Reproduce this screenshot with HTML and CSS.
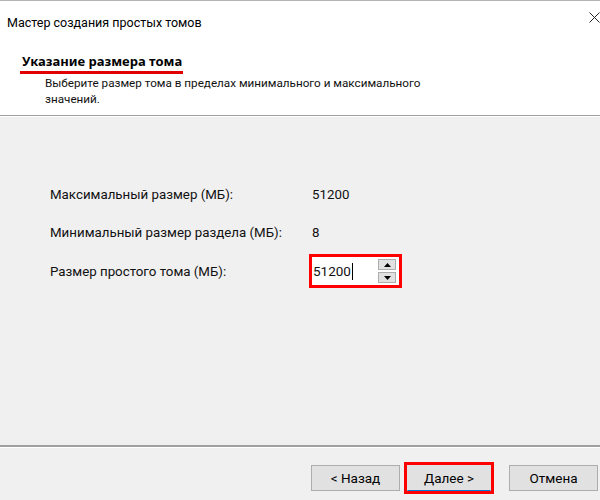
FILE: index.html
```html
<!DOCTYPE html>
<html lang="ru">
<head>
<meta charset="utf-8">
<link rel="stylesheet" href="styles.css">
</head>
<body>
<div class="window">
  <div class="top">
    <div class="titlebar">
      <span class="title">Мастер создания простых томов</span>
      <svg class="close" width="11" height="11" viewBox="0 0 11 11"><path d="M0.5 0.5 L10.5 10.5 M10.5 0.5 L0.5 10.5" stroke="#222" stroke-width="1" fill="none"/></svg>
    </div>
    <div class="header">
      <div class="heading"><span class="mark">Указание размера тома</span></div>
      <div class="subtitle">Выберите размер тома в пределах минимального и максимального<br>значений.</div>
    </div>
  </div>
  <div class="content">
    <div class="row"><span class="label">Максимальный размер (МБ):</span><span class="value">51200</span></div>
    <div class="row"><span class="label">Минимальный размер раздела (МБ):</span><span class="value">8</span></div>
    <div class="row"><span class="label">Размер простого тома (МБ):</span>
      <div class="spin-wrap">
        <div class="spin">
          <span class="spin-text">51200<span class="caret"></span></span>
          <div class="spin-btns">
            <div class="sbtn"><svg width="7" height="4" viewBox="0 0 7 4"><path d="M3.5 0 L7 4 L0 4 Z" fill="#000"/></svg></div>
            <div class="sbtn"><svg width="7" height="4" viewBox="0 0 7 4"><path d="M0 0 L7 0 L3.5 4 Z" fill="#000"/></svg></div>
          </div>
        </div>
      </div>
    </div>
  </div>
  <div class="footer">
    <button class="btn">&lt; Назад</button>
    <div class="hl"><button class="btn default">Далее &gt;</button></div>
    <button class="btn cancel">Отмена</button>
  </div>
</div>
</body>
</html>
```
FILE: styles.css
```css
* { box-sizing: border-box; }
html, body { margin: 0; padding: 0; }
body {
  width: 600px;
  height: 500px;
  overflow: hidden;
  font-family: Roboto, "Noto Sans", sans-serif;
  font-size: 12px;
  color: #000;
  background: #f0f0f0;
}
.window {
  height: 500px;
  display: flex;
  flex-direction: column;
}
.top {
  background: #fff;
  border-top: 1px solid #b4b4b4;
  height: 116px;
  border-bottom: 1px solid #a0a0a0;
  box-shadow: 0 1px 0 #fff;
  flex: none;
}
.titlebar {
  height: 43px;
  display: flex;
  align-items: center;
  justify-content: space-between;
  padding: 0 0 0 7px;
}
.title { font-size: 12.5px; color: #000; }
.close { align-self: flex-start; margin-top: 11px; margin-right: 0; }
.header { padding-left: 20px; }
.heading { height: 30px; display: flex; align-items: flex-end; }
.mark {
  font-family: "Noto Sans", sans-serif;
  font-weight: bold;
  font-size: 13px;
  padding: 0 1px 1px 2px;
  border-bottom: 3px solid #e00000;
  line-height: 17px;
}
.subtitle {
  padding-left: 25px;
  margin-top: 1px;
  line-height: 16px;
  font-size: 11.7px;
  color: #111;
}
.content {
  flex: 1;
  padding: 59px 0 0 50px;
  display: flex;
  flex-direction: column;
}
.row {
  display: flex;
  align-items: center;
  height: 38.5px;
  font-size: 13.3px;
  color: #111;
}
.label { width: 262px; }
.spin-wrap {
  margin-left: -3px;
  border: 3px solid #ff0000;
}
.spin {
  width: 87px;
  height: 28px;
  background: #fff;
  display: flex;
  align-items: center;
  justify-content: space-between;
  padding: 0 3px 0 1px;
}
.spin-text { font-size: 13.5px; display: flex; align-items: center; }
.caret { display: inline-block; width: 1px; height: 17px; background: #000; margin-left: 1px; }
.spin-btns { display: flex; flex-direction: column; gap: 2px; }
.sbtn {
  width: 18px;
  height: 11px;
  background: #e1e1e1;
  border: 1px solid #adadad;
  display: flex;
  align-items: center;
  justify-content: center;
}
.footer {
  flex: none;
  height: 55px;
  border-top: 2px solid #a0a0a0;
  box-shadow: inset 0 1px 0 #fff;
  display: flex;
  align-items: center;
  padding-left: 311px;
  padding-top: 9px;
}
.btn {
  font-family: Roboto, "Noto Sans", sans-serif;
  font-size: 13.5px;
  width: 89px;
  height: 26px;
  background: #e1e1e1;
  border: 1px solid #adadad;
  color: #000;
  padding: 0;
}
.hl {
  margin-left: 4px;
  border: 3px solid #ff0000;
}
.default {
  width: 84px;
  height: 26px;
  border: 1px solid #0078d7;
  border-top-color: #e1e1e1;
  border-left-color: #e1e1e1;
  border-right-color: #e1e1e1;
}
.cancel { margin-left: 15px; }
```
